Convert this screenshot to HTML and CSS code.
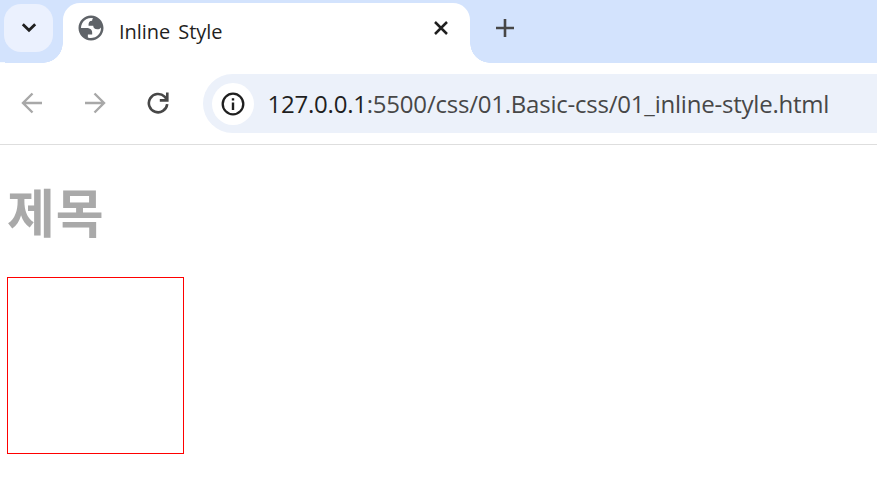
FILE: index.html
```html
<!DOCTYPE html>
<html lang="ko">
<head>
<meta charset="utf-8">
<title>Inline Style</title>
<link rel="stylesheet" href="styles.css">
</head>
<body>
<header class="tabs">
  <button class="search" aria-label="Tabs"><svg width="16" height="10" viewBox="0 0 16 10"><path d="M1.8 1.2 8 7.2l6.200-6" fill="none" stroke="#1f1f1f" stroke-width="2.800"/></svg></button>
  <div class="tab">
    <svg class="globe" width="30" height="30" viewBox="0 0 24 24"><path fill="#5f6368" fill-rule="evenodd" d="M12 2C6.480 2 2 6.480 2 12s4.480 10 10 10 10-4.480 10-10S17.520 2 12 2zM4 12h4.400c3.407.022 4.922 1.730 4.543 5.127H9.488v2.470a8.004 8.004 0 0 0 10.498-8.083C19.327 12.504 18.332 13 17 13c-2.137 0-3.206-.916-3.206-2.750h-3.748c-.274-2.728.683-4.092 2.870-4.092 0-.975.327-1.597.811-1.970A8.004 8.004 0 0 0 4 12z"/></svg>
    <span class="title">Inline Style</span>
    <svg class="close" width="16" height="16" viewBox="0 0 16 16"><path d="m2 2 12 12M14 2 2 14" stroke="#1f1f1f" stroke-width="2.500"/></svg>
  </div>
  <svg class="plus" width="18" height="18" viewBox="0 0 18 18"><path d="M9 0v18M0 9h18" stroke="#474747" stroke-width="2.600"/></svg>
</header>
<nav class="toolbar">
  <svg class="back" width="22" height="22" viewBox="0 0 22 22"><path d="M21 11H2M11.500 1.500 2 11l9.500 9.500" fill="none" stroke="#a8a8a8" stroke-width="2.400"/></svg>
  <svg class="forward" width="22" height="22" viewBox="0 0 22 22"><path d="M1 11h19M10.500 1.500 20 11l-9.500 9.500" fill="none" stroke="#a8a8a8" stroke-width="2.400"/></svg>
  <svg class="reload" width="22" height="22" viewBox="0 0 22 22"><path d="M20.200 12.200A9.200 9.200 0 1 1 17.600 4.700L20 7.500M20.300.4v8H12.800" fill="none" stroke="#474747" stroke-width="2.600"/></svg>
  <div class="address">
    <span class="info"><svg width="24" height="24" viewBox="0 0 24 24"><circle cx="12" cy="12" r="10.300" fill="none" stroke="#1f1f1f" stroke-width="2.300"/><path d="M12 10.600v7.400M12 6.200v2.300" stroke="#1f1f1f" stroke-width="2.400"/></svg></span>
    <span class="url"><b>127.0.0.1</b>:5500/css/01.Basic-css/01_inline-style.html</span>
  </div>
</nav>
<main class="page">
  <h1>제목</h1>
  <div class="box"></div>
</main>
</body>
</html>
```
FILE: styles.css
```css
* { box-sizing: border-box; }
body { margin: 0; width: 877px; height: 483px; overflow: hidden; background: #fff; font-family: "Open Sans", "Noto Sans CJK KR", sans-serif; }
svg { display: block; flex: none; }
.tabs { display: flex; height: 63px; background: #d3e3fd; position: relative; }
.tabs::before { content: ""; position: absolute; left: 0; bottom: 0; width: 5px; height: 1px; background: #fff; opacity: .8; }
.search { width: 49px; height: 48px; margin: 4px 0 0 4px; padding: 0; border: 0; border-radius: 17px; background: #ebf1fe; display: flex; align-items: center; justify-content: center; }
.tab { position: relative; width: 407px; height: 60px; margin: 3px 0 0 10px; background: #fff; border-radius: 17px 17px 0 0; display: flex; }
.tab::before, .tab::after { content: ""; position: absolute; bottom: 0; width: 20px; height: 20px; }
.tab::before { right: 100%; background: radial-gradient(circle at 0 0, transparent 19.5px, #fff 20px); }
.tab::after { left: 100%; background: radial-gradient(circle at 100% 0, transparent 19.5px, #fff 20px); }
.globe { margin: 10px 0 0 13px; }
.title { margin: 14px 0 0 13px; width: 200px; font: 20px/30px "Open Sans", sans-serif; letter-spacing: -.05px; word-spacing: 3px; color: #1f1f1f; white-space: nowrap; }
.close { margin: 17px 21px 0 auto; }
.plus { margin: 19px 0 0 25.5px; }
.toolbar { display: flex; align-items: center; height: 82px; padding-bottom: 1px; border-bottom: 1px solid #dedede; }
.back { margin-left: 20.5px; }
.forward { margin-left: 41px; }
.reload { margin-left: 41px; }
.address { position: relative; top: .5px; display: flex; align-items: center; flex: 1; margin-left: 34.5px; height: 59px; background: #ecf1fa; border-radius: 30px 0 0 30px; }
.info { display: flex; align-items: center; justify-content: center; width: 42px; height: 42px; margin-left: 8.5px; border-radius: 50%; background: #fff; }
.url { margin-left: 14px; font-size: 24px; line-height: 34px; letter-spacing: -.22px; color: #474747; white-space: nowrap; }
.url b { font-weight: 400; color: #1f1f1f; }
.page { padding: 32px 7px 0; }
h1 { margin: 0; height: 100px; font: 700 52px/67px "Noto Sans CJK KR", sans-serif; letter-spacing: .8px; color: #a9a9a9; }
.box { width: 177px; height: 177px; border: 1px solid #f00; }
```
